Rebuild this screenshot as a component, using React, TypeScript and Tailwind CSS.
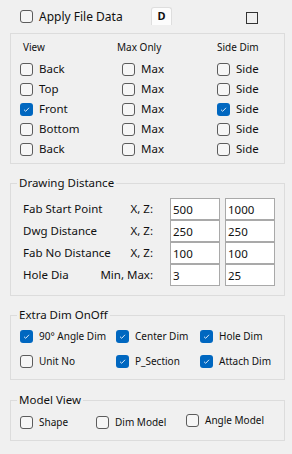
import React from 'react';

const Box = ({ checked = false }: { checked?: boolean }) =>
    checked ? (
        <span className="flex h-[13px] w-[13px] shrink-0 items-center justify-center rounded-[3px] bg-[#0067c0]">
            <svg width="9" height="9" viewBox="0 0 9 9">
                <path d="M2 4.7 L3.7 6.3 L7 2.8" stroke="#d6e6f7" strokeWidth="1" fill="none" />
            </svg>
        </span>
    ) : (
        <span className="h-[13px] w-[13px] shrink-0 rounded-[3px] border border-[#5c5c5c] bg-[#f6f6f6]" />
    );

const Check = ({ label, checked = false, className = '' }: { label: string; checked?: boolean; className?: string }) => (
    <div className={`flex h-[20px] items-center gap-[6px] ${className}`}>
        <Box checked={checked} />
        <span>{label}</span>
    </div>
);

const views = [
    { view: 'Back', side: false, on: false },
    { view: 'Top', side: false, on: false },
    { view: 'Front', side: true, on: true },
    { view: 'Bottom', side: false, on: false },
    { view: 'Back', side: false, on: false },
];

const distances = [
    { name: 'Fab Start Point', axis: 'X, Z:', a: '500', b: '1000' },
    { name: 'Dwg Distance', axis: 'X, Z:', a: '250', b: '250' },
    { name: 'Fab No Distance', axis: 'X, Z:', a: '100', b: '100' },
    { name: 'Hole Dia', axis: 'Min, Max:', a: '3', b: '25' },
];

export default function App() {
    return (
        <div className="h-[454px] w-[292px] overflow-hidden bg-[#f0f0f0] font-['Noto_Sans',sans-serif] text-[#111]">
            {/* Top bar */}
            <div className="flex h-[33px] pl-[20px]">
                <div className="mt-[10px] flex h-[13px] w-[131px] items-center gap-[6px] text-[12px]">
                    <Box />
                    <span>Apply File Data</span>
                </div>
                <div className="mt-[7px] flex h-[18px] w-[21px] items-center justify-center rounded-t-[3px] border border-b-0 border-[#dedede] bg-[#fcfcfc] text-[11px] font-bold">
                    D
                </div>
                <span className="ml-[74px] mt-[12px] h-[12px] w-[12px] border border-[#333]" />
            </div>

            {/* View panel */}
            <div className="ml-[10px] w-[275px] border border-[#dcdcdc] pb-[4px] pl-[9px] pt-[5px] text-[11.5px]">
                <div className="grid h-[16px] grid-cols-[97px_100px_1fr] items-center text-[10px]">
                    <span className="pl-[3px]">View</span>
                    <span>Max Only</span>
                    <span>Side Dim</span>
                </div>
                <div className="mt-[4px]">
                    {views.map((v, i) => (
                        <div key={i} className="grid grid-cols-[97px_100px_1fr]">
                            <Check label={v.view} checked={v.on} />
                            <Check label="Max" className="pl-[5px]" />
                            <Check label="Side" checked={v.side} />
                        </div>
                    ))}
                </div>
            </div>

            {/* Drawing Distance */}
            <fieldset className="ml-[10px] mt-[11px] w-[275px] border border-[#dcdcdc] pb-[9px]">
                <legend className="ml-[6px] px-[2px] text-[11.5px] leading-[16px]">Drawing Distance</legend>
                <div className="mt-[7px] text-[11.5px]">
                    {distances.map((d) => (
                        <div key={d.name} className="flex h-[22px] items-center pl-[12px]">
                            <div className="flex w-[130px] justify-between">
                                <span>{d.name}</span>
                                <span>{d.axis}</span>
                            </div>
                            <input
                                readOnly
                                value={d.a}
                                className="ml-[17px] h-[22px] w-[50px] border border-[#a9a9a9] bg-white px-[2px] text-[11.5px] outline-none"
                            />
                            <input
                                readOnly
                                value={d.b}
                                className="ml-[5px] h-[22px] w-[50px] border border-[#a9a9a9] bg-white px-[2px] text-[11.5px] outline-none"
                            />
                        </div>
                    ))}
                </div>
            </fieldset>

            {/* Extra Dim OnOff */}
            <fieldset className="ml-[10px] mt-[11px] w-[275px] border border-[#dcdcdc] pb-[8px] pl-[9px]">
                <legend className="-ml-[3px] px-[2px] text-[11.5px] leading-[16px]">Extra Dim OnOff</legend>
                <div className="mt-[3px] grid grid-cols-[96px_84px_1fr] gap-y-[5px] text-[10px]">
                    <Check label="90° Angle Dim" checked />
                    <Check label="Center Dim" checked />
                    <Check label="Hole Dim" checked />
                    <Check label="Unit No" />
                    <Check label="P_Section" checked />
                    <Check label="Attach Dim" checked />
                </div>
            </fieldset>

            {/* Model View */}
            <fieldset className="ml-[10px] mt-[12px] w-[275px] border border-[#dcdcdc] pb-[8px] pl-[9px]">
                <legend className="-ml-[3px] px-[2px] text-[11.5px] leading-[16px]">Model View</legend>
                <div className="mt-[4px] grid grid-cols-[76px_90px_1fr] text-[10px]">
                    <Check label="Shape" />
                    <Check label="Dim Model" />
                    <Check label="Angle Model" className="-mt-[2px]" />
                </div>
            </fieldset>
        </div>
    );
}
